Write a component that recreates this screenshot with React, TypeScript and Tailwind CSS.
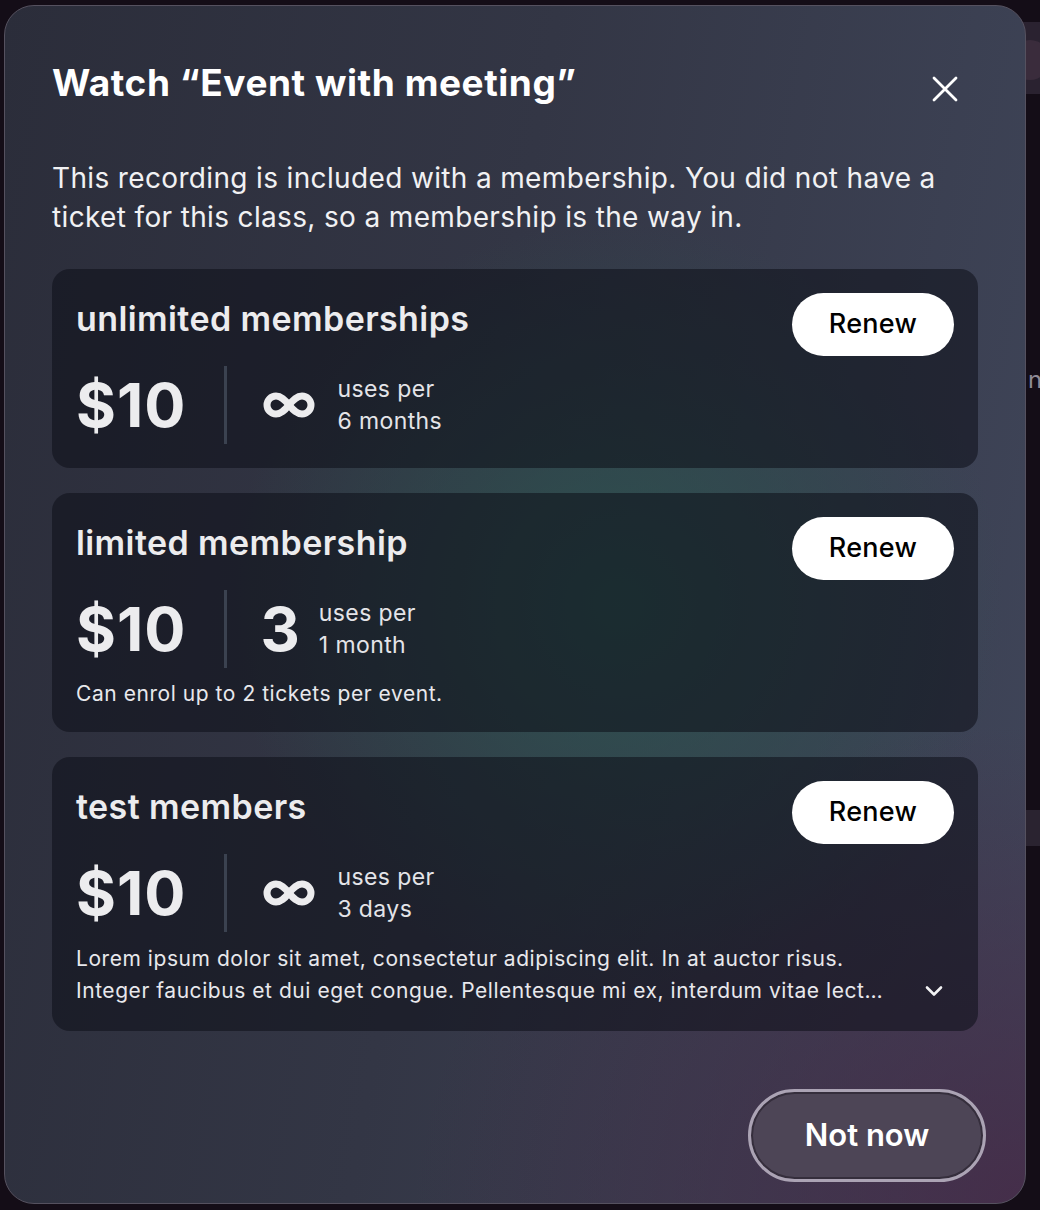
import React from "react"

type Plan = {
  name: string
  price: string
  uses: "infinite" | string
  period: string
  note?: string
  long?: boolean
}

const plans: Plan[] = [
  { name: "unlimited memberships", price: "$10", uses: "infinite", period: "6 months" },
  {
    name: "limited membership",
    price: "$10",
    uses: "3",
    period: "1 month",
    note: "Can enrol up to 2 tickets per event.",
  },
  {
    name: "test members",
    price: "$10",
    uses: "infinite",
    period: "3 days",
    note: "Lorem ipsum dolor sit amet, consectetur adipiscing elit. In at auctor risus. Integer faucibus et dui eget congue. Pellentesque mi ex, interdum vitae lectus sed, fermentum pretium nisl. Curabitur sit amet ligula.",
    long: true,
  },
]

function Infinity() {
  return (
    <svg width="58" height="30" viewBox="0 0 56 30" fill="none" className="shrink-0">
      <path
        d="M28 15c-4.5-5.5-8-9-13-9a9 9 0 0 0 0 18c5 0 8.5-3.5 13-9zm0 0c4.5 5.5 8 9 13 9a9 9 0 0 0 0-18c-5 0-8.5 3.5-13 9z"
        stroke="#ececee"
        strokeWidth="7"
        strokeLinejoin="round"
      />
    </svg>
  )
}

function PlanCard({ plan }: { plan: Plan }) {
  return (
    <div className="rounded-[18px] bg-[rgba(12,14,24,0.55)] px-6 pt-6 pb-6">
      <div className="flex items-start justify-between">
        <h3 className="mt-[6px] text-[34px] leading-[40px] font-semibold tracking-[0.4px] text-[#ececee]">
          {plan.name}
        </h3>
        <button
          type="button"
          className="h-[63px] w-[162px] rounded-full bg-white text-[27px] font-medium tracking-[0.3px] text-black"
        >
          Renew
        </button>
      </div>
      <div className="mt-[10px] flex h-[78px] items-center">
        <span className="text-[61px] leading-none font-bold tracking-[1px] text-[#ececee]">{plan.price}</span>
        <span className="mr-[33px] ml-[38px] h-[78px] w-[3px] bg-[#3b4250]" />
        <div className="flex items-center gap-[19px]">
          {plan.uses === "infinite" ? (
            <Infinity />
          ) : (
            <span className="text-[61px] leading-none font-bold text-[#ececee]">{plan.uses}</span>
          )}
          <div className="text-[23px] leading-[32px] tracking-[0.4px] text-[#e4e4e8]">
            <div>uses per</div>
            <div>{plan.period}</div>
          </div>
        </div>
      </div>
      {plan.note && !plan.long && (
        <p className="mt-[12px] text-[21px] leading-[28px] tracking-[0.55px] text-[#e8e8ec]">{plan.note}</p>
      )}
      {plan.note && plan.long && (
        <div className="mt-[11px] flex items-end justify-between">
          <p className="line-clamp-2 w-[818px] text-[21px] leading-[32px] tracking-[0.55px] text-[#e8e8ec]">
            {plan.note}
          </p>
          <button type="button" className="mr-[6px] mb-[2px] flex h-7 w-7 items-center justify-center">
            <svg width="20" height="12" viewBox="0 0 20 12" fill="none">
              <path d="M3 2.5l7 7 7-7" stroke="#f2f2f4" strokeWidth="2.6" strokeLinecap="round" strokeLinejoin="round" />
            </svg>
          </button>
        </div>
      )}
    </div>
  )
}

export default function App() {
  return (
    <div
      className="relative h-[1210px] w-[1040px] overflow-hidden bg-[#140d17]"
      style={{ fontFamily: "Inter, 'Noto Sans', sans-serif" }}
    >
      {/* page behind the dialog */}
      <div className="absolute top-[22px] left-[1000px] h-[72px] w-[80px] rounded-[20px] bg-[#2a2230]" />
      <div className="absolute top-[40px] left-[1010px] h-[40px] w-[40px] rounded-full bg-[#3a2c3c]" />
      <div className="absolute top-[362px] left-[1028px] text-[24px] text-[#8f8a96]">na</div>
      <div className="absolute top-[810px] left-[1000px] h-[36px] w-[60px] bg-[#2a2330]" />

      <div className="absolute top-[5px] left-[4px] h-[1199px] w-[1022px] overflow-hidden rounded-[30px] border border-[#55515f] bg-[radial-gradient(ellipse_38%_32%_at_60%_50%,rgba(44,84,80,0.9),transparent),radial-gradient(ellipse_60%_40%_at_100%_100%,rgba(70,40,70,0.8),transparent),linear-gradient(100deg,#2b2d3a_0%,#333645_45%,#40465a_100%)] px-[47px] pt-[53px]">
        <div className="flex items-start justify-between">
          <h2 className="text-[37px] leading-[48px] font-bold tracking-[0.55px] text-white">
            Watch “Event with meeting”
          </h2>
          <button type="button" className="mt-[12px] mr-[15px] flex h-9 w-9 items-center justify-center">
            <svg width="26" height="26" viewBox="0 0 26 26" fill="none">
              <path d="M2 2l22 22M24 2L2 24" stroke="#ffffff" strokeWidth="2.8" strokeLinecap="round" />
            </svg>
          </button>
        </div>
        <p className="mt-[52px] text-[28px] leading-[39px] tracking-[0.35px] text-[#f1f1f3]">
          This recording is included with a membership. You did not have a ticket for this class, so a
          membership is the way in.
        </p>
        <div className="mt-[32px] flex flex-col gap-[25px]">
          {plans.map((p) => (
            <PlanCard key={p.name} plan={p} />
          ))}
        </div>
        <div className="mt-[58px] -mr-[8px] flex justify-end">
          <button
            type="button"
            className="h-[93px] w-[238px] rounded-full border-[3px] border-[#aba3b4] bg-[#4d4556] text-[31px] font-semibold text-white shadow-[inset_0_0_0_2px_#352e3c]"
          >
            Not now
          </button>
        </div>
      </div>
    </div>
  )
}
